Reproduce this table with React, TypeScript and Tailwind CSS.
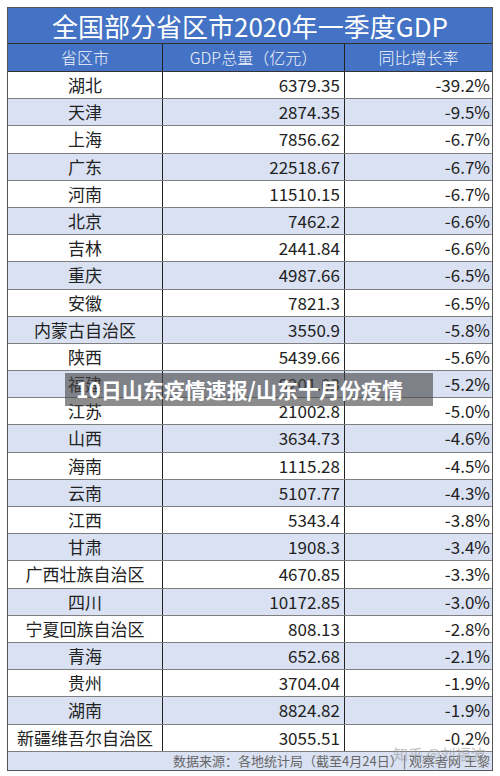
import React from 'react';

const rows: [string, string, string][] = [
  ['湖北', '6379.35', '-39.2%'],
  ['天津', '2874.35', '-9.5%'],
  ['上海', '7856.62', '-6.7%'],
  ['广东', '22518.67', '-6.7%'],
  ['河南', '11510.15', '-6.7%'],
  ['北京', '7462.2', '-6.6%'],
  ['吉林', '2441.84', '-6.6%'],
  ['重庆', '4987.66', '-6.5%'],
  ['安徽', '7821.3', '-6.5%'],
  ['内蒙古自治区', '3550.9', '-5.8%'],
  ['陕西', '5439.66', '-5.6%'],
  ['福建', '9201.03', '-5.2%'],
  ['江苏', '21002.8', '-5.0%'],
  ['山西', '3634.73', '-4.6%'],
  ['海南', '1115.28', '-4.5%'],
  ['云南', '5107.77', '-4.3%'],
  ['江西', '5343.4', '-3.8%'],
  ['甘肃', '1908.3', '-3.4%'],
  ['广西壮族自治区', '4670.85', '-3.3%'],
  ['四川', '10172.85', '-3.0%'],
  ['宁夏回族自治区', '808.13', '-2.8%'],
  ['青海', '652.68', '-2.1%'],
  ['贵州', '3704.04', '-1.9%'],
  ['湖南', '8824.82', '-1.9%'],
  ['新疆维吾尔自治区', '3055.51', '-0.2%'],
];

export default function App() {
  return (
    <div
      className="relative w-[500px] h-[776px] bg-white pt-[7px] pl-[7px]"
      style={{ fontFamily: '"Noto Sans CJK SC", "Noto Sans", sans-serif' }}
    >
      <div className="w-[486px] border border-[#555] text-[#222]">
        <div className="h-[36px] bg-[#4472c4] text-white text-[26px] leading-[36px] text-center border-b border-[#333]">
          全国部分省区市2020年一季度GDP
        </div>
        <div className="grid grid-cols-[155px_182px_1fr] h-[28px] bg-[#4472c4] text-[#f2f5fb] text-[16px] font-light leading-[27px] text-center border-b border-[#333]">
          <div className="border-r border-[#222]">省区市</div>
          <div className="border-r border-[#222]">GDP总量（亿元）</div>
          <div>同比增长率</div>
        </div>
        {rows.map(([p, g, r], i) => (
          <div
            key={p}
            className={`grid grid-cols-[155px_182px_1fr] h-[27.2px] text-[17px] leading-[26px] border-b border-[#7f7f7f] ${
              i % 2 === 0 ? 'bg-white' : 'bg-[#d9e1f2]'
            }`}
          >
            <div className="border-r border-[#222] text-center">{p}</div>
            <div className="border-r border-[#222] text-right pr-[4px]">{g}</div>
            <div className="text-right pr-[2px]">{r}</div>
          </div>
        ))}
        <div className="h-[18px] bg-[#d9e1f2] text-[13px] leading-[18px] text-right pr-[2px] text-[#666]">
          数据来源：各地统计局（截至4月24日）| 观察者网 王黎
        </div>
      </div>
      <div className="absolute left-[393px] top-[743px] text-[15px] text-[#999] opacity-60 whitespace-nowrap">
        知乎 @刘福波
      </div>
      <div className="absolute left-[65px] top-[373px] w-[368px] h-[33px] bg-[rgba(70,70,70,0.62)] pl-[11px] text-white font-bold text-[21px] leading-[33px] whitespace-nowrap">
        10日山东疫情速报/山东十月份疫情
      </div>
    </div>
  );
}
